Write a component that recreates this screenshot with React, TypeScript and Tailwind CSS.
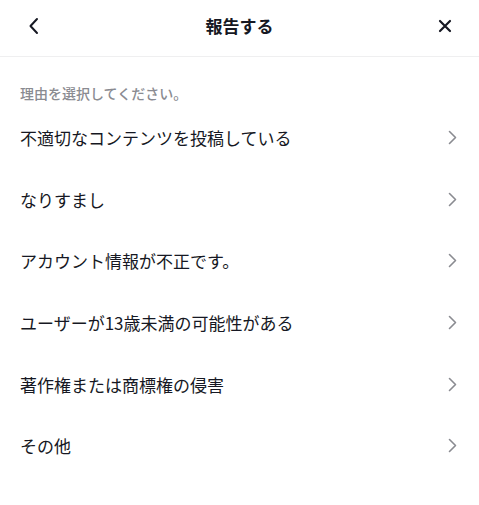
const reasons = [
  '不適切なコンテンツを投稿している',
  'なりすまし',
  'アカウント情報が不正です。',
  'ユーザーが13歳未満の可能性がある',
  '著作権または商標権の侵害',
  'その他',
]

function ChevronRight() {
  return (
    <svg width="9" height="15" viewBox="0 0 9 15" fill="none" className="shrink-0">
      <path d="M1.5 1.5L7.5 7.5L1.5 13.5" stroke="#8a8b91" strokeWidth="1.6" strokeLinecap="round" strokeLinejoin="round" />
    </svg>
  )
}

export default function App() {
  return (
    <div
      className="w-[479px] h-[505px] bg-white text-[#161823] overflow-hidden"
      style={{ fontFamily: '"Noto Sans CJK JP", "Noto Sans", sans-serif' }}
    >
      {/* Header */}
      <div className="h-[57px] flex items-center justify-between px-[24px] pb-[5px] border-b border-[#efeff0]">
        <button className="w-[20px] h-[20px] flex items-center justify-center">
          <svg width="14" height="18" viewBox="0 0 14 18" fill="none">
            <path d="M10 2L3.5 9L10 16" stroke="#161823" strokeWidth="2" strokeLinecap="round" strokeLinejoin="round" />
          </svg>
        </button>
        <h1 className="text-[17px] font-bold leading-none">報告する</h1>
        <button className="w-[20px] h-[20px] flex items-center justify-center">
          <svg width="16" height="16" viewBox="0 0 16 16" fill="none">
            <path d="M3 3L13 13M13 3L3 13" stroke="#161823" strokeWidth="2.2" strokeLinecap="round" />
          </svg>
        </button>
      </div>

      {/* Subtitle */}
      <div className="h-[50px] flex items-end px-[20px] pb-[5px]">
        <p className="text-[14px] leading-[18px] font-medium text-[#8a8b91]">理由を選択してください。</p>
      </div>

      {/* Reasons */}
      <ul>
        {reasons.map((r) => (
          <li key={r} className="h-[61.6px] flex items-center justify-between pl-[20px] pr-[22px]">
            <span className="text-[17px] leading-none">{r}</span>
            <ChevronRight />
          </li>
        ))}
      </ul>
    </div>
  )
}
